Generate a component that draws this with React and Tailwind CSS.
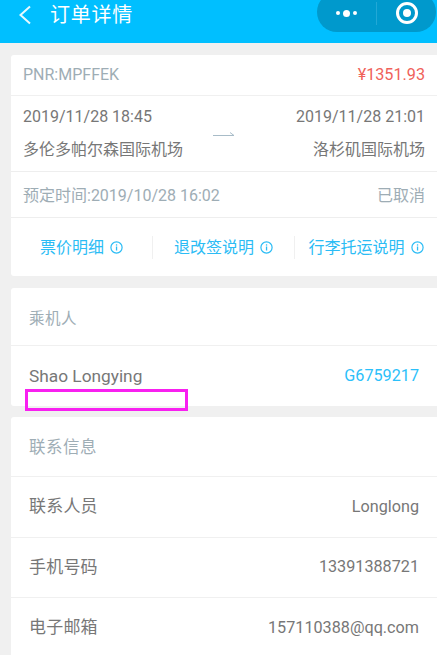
import React from "react";

const FONT = "font-['Roboto','Noto_Sans_CJK_SC',sans-serif]";

function InfoIcon() {
  return (
    <svg width="13" height="13" viewBox="0 0 13 13" className="ml-[6px] shrink-0">
      <circle cx="6.5" cy="6.5" r="5.6" fill="none" stroke="#2bbcf5" strokeWidth="1.2" />
      <rect x="5.9" y="5.5" width="1.3" height="4" fill="#2bbcf5" />
      <rect x="5.9" y="3.3" width="1.3" height="1.3" fill="#2bbcf5" />
    </svg>
  );
}

function ContactRow({ label, value }) {
  return (
    <div className="flex h-[60.5px] items-center justify-between border-t border-[#f0f0f0] pl-[18px] pr-[18px]">
      <span className="text-[17px] tracking-[0.2px] text-[#777]">{label}</span>
      <span className="text-[16.2px] text-[#777]">{value}</span>
    </div>
  );
}

export default function App() {
  return (
    <div className={`relative h-[655px] w-[437px] overflow-hidden bg-[#f0f0f0] ${FONT}`}>
      {/* Title bar */}
      <div className="flex h-[43px] items-start justify-between bg-[#00bfff]">
        <div className="flex h-[29px] items-center pl-[18px] text-white">
          <svg width="14" height="20" viewBox="0 0 14 20">
            <path d="M12 1.5 L2.5 10 L12 18.5" fill="none" stroke="#fff" strokeWidth="2" opacity="0.9" />
          </svg>
          <span className="ml-[18px] text-[20px] tracking-[0.75px]">订单详情</span>
        </div>
        <div className="mr-px flex h-[40px] w-[119px] -translate-y-[8px] items-center rounded-[20px] bg-[#0099cc] pt-[2px]">
          <div className="flex w-[59px] items-center justify-center gap-[3px]">
            <span className="h-[4px] w-[4px] rounded-full bg-white" />
            <span className="h-[7px] w-[7px] rounded-full bg-white" />
            <span className="h-[4px] w-[4px] rounded-full bg-white" />
          </div>
          <div className="h-[23px] w-px bg-[#22a8d6]" />
          <div className="flex flex-1 items-center justify-center">
            <svg width="24" height="24" viewBox="0 0 24 24">
              <circle cx="12" cy="12" r="9.5" fill="none" stroke="#fff" strokeWidth="3" />
              <circle cx="12" cy="12" r="4" fill="#fff" />
            </svg>
          </div>
        </div>
      </div>

      <div className="ml-[11px] flex flex-col gap-[12px] pt-[12px]">
        {/* Order card */}
        <div className="rounded-l-[3px] bg-white">
          <div className="flex h-[40px] items-center justify-between pl-[12px] pr-[12px]">
            <span className="text-[16px] text-[#9eadb5]">PNR:MPFFEK</span>
            <span className="text-[16.2px] text-[#f0625a]">¥1351.93</span>
          </div>
          <div className="grid h-[76px] grid-cols-[1fr_auto_1fr] items-center border-t border-[#f0f0f0] pl-[12px] pr-[12px]">
            <div className="flex flex-col gap-[13px]">
              <span className="text-[16px] leading-[20px] text-[#777]">2019/11/28 18:45</span>
              <span className="whitespace-nowrap text-[16px] leading-[20px] text-[#777]">多伦多帕尔森国际机场</span>
            </div>
            <svg width="22" height="6" viewBox="0 0 22 6" className="mb-[1px]">
              <path d="M0 5.5 H21 L17 2.5" fill="none" stroke="#a8bcc8" strokeWidth="1" />
            </svg>
            <div className="flex flex-col items-end gap-[13px]">
              <span className="text-[16px] leading-[20px] text-[#777]">2019/11/28 21:01</span>
              <span className="whitespace-nowrap text-[16px] leading-[20px] text-[#777]">洛杉矶国际机场</span>
            </div>
          </div>
          <div className="flex h-[47px] items-center justify-between border-t border-b border-[#eeeeee] pl-[12px] pr-[12px] pt-[3px]">
            <span className="text-[16px] text-[#9eadb5]">预定时间:2019/10/28 16:02</span>
            <span className="text-[16px] text-[#9eadb5]">已取消</span>
          </div>
          <div className="flex h-[58px] items-center pt-[1px] text-[16px] text-[#2bbcf5]">
            <div className="flex w-[141px] items-center justify-center">
              <span>票价明细</span>
              <InfoIcon />
            </div>
            <div className="h-[23px] w-px bg-[#f0f0f0]" />
            <div className="flex w-[141px] items-center justify-center">
              <span>退改签说明</span>
              <InfoIcon />
            </div>
            <div className="h-[23px] w-px bg-[#f0f0f0]" />
            <div className="flex flex-1 items-center justify-center">
              <span>行李托运说明</span>
              <InfoIcon />
            </div>
          </div>
        </div>

        {/* Passenger card */}
        <div className="-mb-px rounded-l-[3px] bg-white">
          <div className="flex h-[57px] items-center pl-[18px] pt-[6px] text-[15.5px] tracking-[0.5px] text-[#9eadb5]">乘机人</div>
          <div className="flex h-[61px] items-start justify-between border-t border-[#f0f0f0] pl-[18px] pr-[18px] pt-[19px]">
            <span className="text-[17.3px] leading-[22px] text-[#777]">Shao Longying</span>
            <span className="text-[16.2px] leading-[22px] text-[#2bc0fa]">G6759217</span>
          </div>
        </div>

        {/* Contact card */}
        <div className="rounded-l-[3px] bg-white pb-[40px]">
          <div className="flex h-[59px] items-center pl-[18px] pt-[3px] text-[16.5px] tracking-[0.5px] text-[#9eadb5]">联系信息</div>
          <ContactRow label="联系人员" value="Longlong" />
          <ContactRow label="手机号码" value="13391388721" />
          <ContactRow label="电子邮箱" value="157110388@qq.com" />
        </div>
      </div>

      {/* Annotation box drawn over the passenger card */}
      <div className="absolute left-[25px] top-[389px] h-[22px] w-[163px] border-[3px] border-[#f820f0]" />
    </div>
  );
}
